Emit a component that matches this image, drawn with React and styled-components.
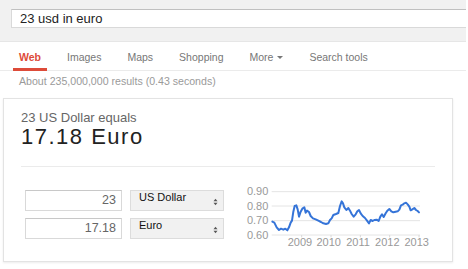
import React from "react";
import styled, { createGlobalStyle } from "styled-components";

const Global = createGlobalStyle`
  html, body { margin: 0; padding: 0; background: #fff; }
  body { font-family: "Liberation Sans", Arial, sans-serif; }
  * { box-sizing: border-box; }
`;

const Page = styled.div`
  width: 468px;
  height: 269px;
  overflow: hidden;
  background: #fff;
`;

const Header = styled.div`
  width: 466px;
  height: 42px;
  background: #f1f1f1;
  border-bottom: 1px solid #e6e6e6;
  padding: 9px 0 0 11px;
  display: flex;
`;

const SearchBox = styled.div`
  flex: 1;
  height: 19px;
  background: #fff;
  border: 1px solid #d9d9d9;
  border-top-color: #c0c0c0;
  border-right: none;
  padding-left: 8px;
  font-size: 13px;
  line-height: 17px;
  color: #222;
`;

const Tabs = styled.div`
  width: 466px;
  height: 29px;
  display: flex;
  gap: 14px;
  padding-left: 13px;
  border-bottom: 1px solid #ebebeb;
`;

const Tab = styled.div`
  height: 29px;
  padding: 9px 6px 0;
  border-bottom: 3px solid ${(p) => (p.$active ? "#dd4b39" : "transparent")};
  margin-bottom: -1px;
  font-size: 10.5px;
  line-height: 13px;
  font-weight: ${(p) => (p.$active ? "bold" : "normal")};
  color: ${(p) => (p.$active ? "#dd4b39" : "#777")};
  display: flex;
  align-items: flex-start;
  gap: 4px;
  white-space: nowrap;
`;

const Caret = styled.svg`
  margin-top: 5px;
`;

const Stats = styled.div`
  padding: 4px 0 0 19px;
  font-size: 10.6px;
  line-height: 13px;
  color: #9a9a9a;
`;

const Card = styled.div`
  margin: 10px 0 0 3px;
  width: 450px;
  height: 164px;
  border: 1px solid #e3e3e3;
  box-shadow: 0 1px 2px rgba(0, 0, 0, 0.08);
  padding: 11px 17px 0 17px;
`;

const Equals = styled.div`
  font-size: 13px;
  line-height: 15px;
  color: #666;
`;

const Result = styled.div`
  font-size: 22px;
  line-height: 24px;
  letter-spacing: 1.5px;
  color: #222;
`;

const Divider = styled.div`
  margin-top: 17px;
  height: 1px;
  background: #ebebeb;
`;

const Converter = styled.div`
  margin-top: 16px;
  display: flex;
  align-items: flex-start;
  padding-left: 4px;
`;

const Form = styled.div`
  margin-top: 7px;
  display: grid;
  grid-template-columns: 97px 94px;
  grid-auto-rows: 21px;
  column-gap: 8px;
  row-gap: 7px;
`;

const NumberBox = styled.div`
  border: 1px solid #d9d9d9;
  border-top-color: #c8c8c8;
  background: #fff;
  text-align: right;
  padding-right: 5px;
  font-size: 12.5px;
  line-height: 19px;
  color: #666;
`;

const Select = styled.div`
  border: 1px solid #dcdcdc;
  background: #f1f1f1;
  padding: 1px 5px 0 8px;
  display: flex;
  justify-content: space-between;
  font-size: 11px;
  line-height: 11px;
  color: #111;
`;

const Arrows = styled.svg`
  align-self: center;
  margin-top: 1px;
`;

const Chart = styled.svg`
  margin-left: 16px;
  display: block;
`;

const linePath =
  "M127,155 L133,158 L140,172 L147,180 L153,176 L160,179 L166,176 L172,181 L177,172 L182,158 L186,152 L190,125 L194,108 L199,106 L203,118 L207,140 L212,125 L217,116 L223,112 L227,128 L231,122 L237,126 L242,138 L249,145 L257,148 L265,152 L273,156 L280,160 L288,162 L295,160 L300,150 L305,145 L310,135 L318,132 L325,129 L330,108 L335,94 L339,100 L343,112 L349,120 L355,114 L360,122 L365,132 L371,140 L377,133 L382,124 L387,120 L392,130 L398,138 L405,144 L411,152 L417,160 L422,150 L428,153 L433,150 L440,149 L446,153 L451,140 L456,133 L461,141 L467,130 L472,122 L478,117 L484,124 L490,127 L497,125 L503,124 L508,119 L513,106 L518,104 L523,100 L528,98 L533,103 L538,110 L542,121 L547,118 L553,114 L558,120 L563,123 L567,127";

const yTicks = [
  { label: "0.90", y: 65 },
  { label: "0.80", y: 108 },
  { label: "0.70", y: 152 },
  { label: "0.60", y: 195 },
];

const years = [
  { label: "2009", x: 210, t: 215 },
  { label: "2010", x: 296, t: 303 },
  { label: "2011", x: 384, t: 391 },
  { label: "2012", x: 472, t: 479 },
  { label: "2013", x: 560, t: 567 },
];

function SelectArrows() {
  return (
    <Arrows width="5" height="8" viewBox="0 0 5 8">
      <path d="M0.5,3.2 L2.5,0.8 L4.5,3.2 Z" fill="#555" />
      <path d="M0.5,4.8 L2.5,7.2 L4.5,4.8 Z" fill="#555" />
    </Arrows>
  );
}

export default function App() {
  const tabs = ["Web", "Images", "Maps", "Shopping", "More", "Search tools"];
  return (
    <>
      <Global />
      <Page>
        <Header>
          <SearchBox>23 usd in euro</SearchBox>
        </Header>
        <Tabs>
          {tabs.map((t) => (
            <Tab key={t} $active={t === "Web"}>
              {t}
              {t === "More" && (
                <Caret width="6" height="3" viewBox="0 0 6 3">
                  <path d="M0,0 L6,0 L3,3 Z" fill="#777" />
                </Caret>
              )}
            </Tab>
          ))}
        </Tabs>
        <Stats>About 235,000,000 results (0.43 seconds)</Stats>
        <Card>
          <Equals>23 US Dollar equals</Equals>
          <Result>17.18 Euro</Result>
          <Divider />
          <Converter>
            <Form>
              <NumberBox>23</NumberBox>
              <Select>
                <span>US Dollar</span>
                <SelectArrows />
              </Select>
              <NumberBox>17.18</NumberBox>
              <Select>
                <span>Euro</span>
                <SelectArrows />
              </Select>
            </Form>
            <Chart width="195" height="67" viewBox="30 39 585 201">
              {yTicks.map((t) => (
                <g key={t.label}>
                  <line x1="125" x2="570" y1={t.y} y2={t.y} stroke="#e4e4e4" strokeWidth="3" />
                  <text
                    x="115"
                    y={t.y + 11}
                    textAnchor="end"
                    fontSize="33"
                    fill="#999"
                    fontFamily="Liberation Sans, Arial, sans-serif"
                  >
                    {t.label}
                  </text>
                </g>
              ))}
              {years.map((yr) => (
                <g key={yr.label}>
                  <line x1={yr.t} x2={yr.t} y1="195" y2="202" stroke="#d8d8d8" strokeWidth="3" />
                  <text
                    x={yr.x}
                    y="229"
                    textAnchor="middle"
                    fontSize="33"
                    fill="#999"
                    fontFamily="Liberation Sans, Arial, sans-serif"
                  >
                    {yr.label}
                  </text>
                </g>
              ))}
              <path
                d={linePath}
                fill="none"
                stroke="#3574d8"
                strokeWidth="6"
                strokeLinejoin="round"
                strokeLinecap="round"
              />
            </Chart>
          </Converter>
        </Card>
      </Page>
    </>
  );
}
